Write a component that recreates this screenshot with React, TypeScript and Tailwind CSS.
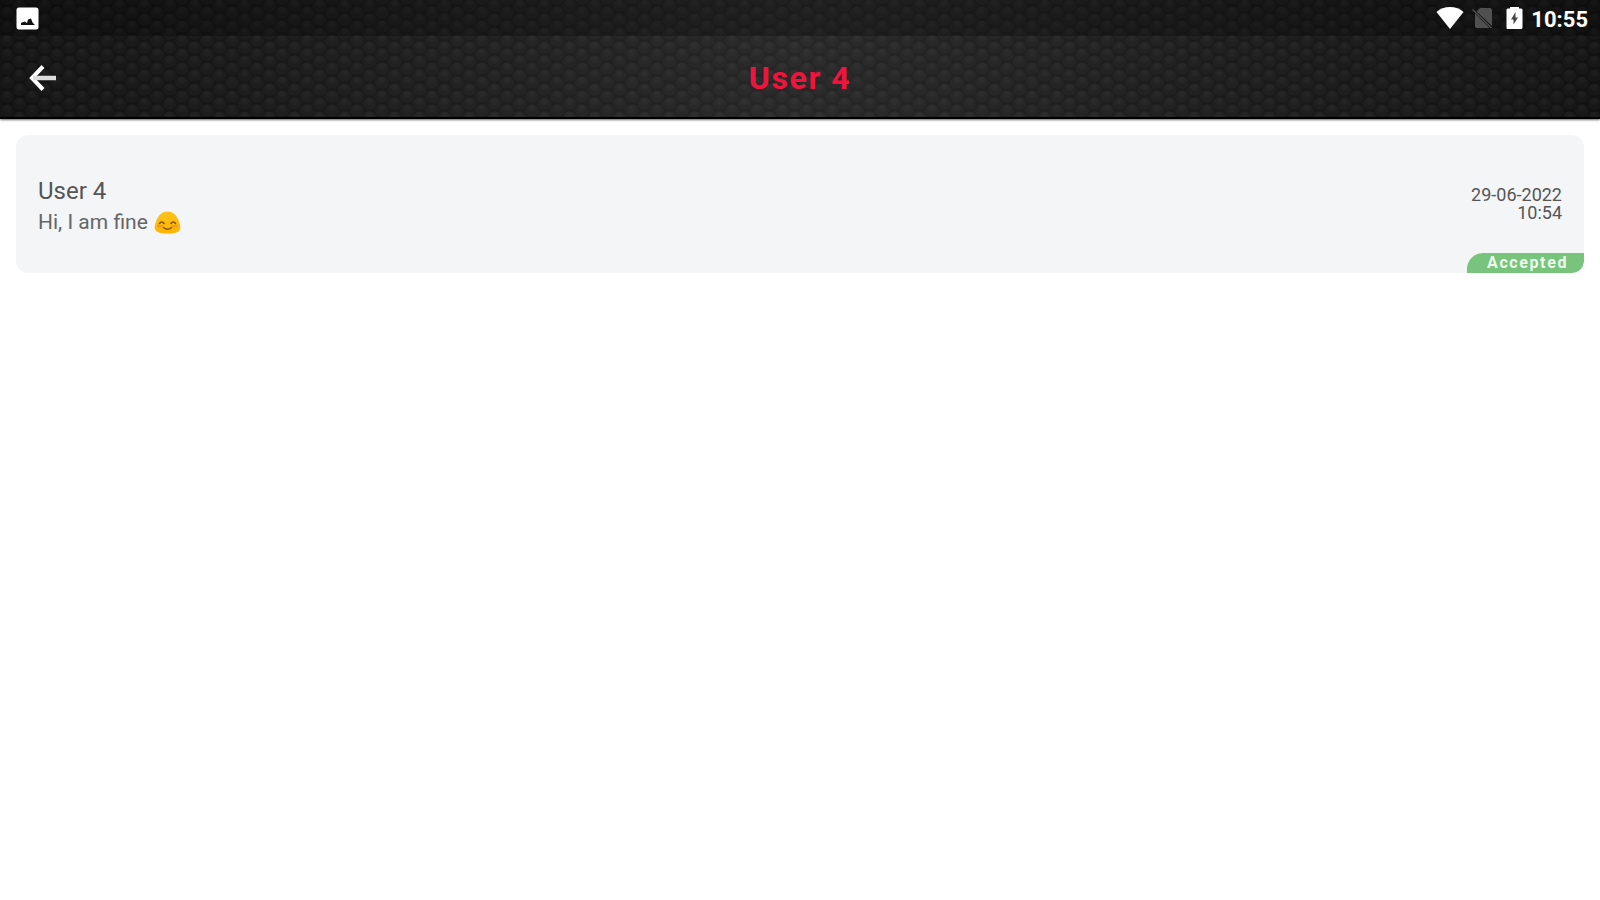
import React from 'react'

type Message = {
    id: number
    name: string
    text: string
    date: string
    time: string
    status: string
}

const messages: Message[] = [
    { id: 1, name: 'User 4', text: 'Hi, I am fine', date: '29-06-2022', time: '10:54', status: 'Accepted' },
]

const HexTexture = () => (
    <svg className="absolute inset-0 h-full w-full" aria-hidden="true">
        <defs>
            <radialGradient id="bump" cx="50%" cy="25%" r="75%">
                <stop offset="0" stopColor="#fff" stopOpacity="0.06" />
                <stop offset="0.6" stopColor="#fff" stopOpacity="0.02" />
                <stop offset="1" stopColor="#000" stopOpacity="0.08" />
            </radialGradient>
            <pattern id="hex" width="25" height="14" patternUnits="userSpaceOnUse" x="7" y="6">
                <rect width="25" height="14" fill="#000" fillOpacity="0.2" />
                <ellipse cx="0" cy="7" rx="7" ry="6.5" fill="url(#bump)" />
                <ellipse cx="25" cy="7" rx="7" ry="6.5" fill="url(#bump)" />
                <ellipse cx="12.5" cy="0" rx="7" ry="6.5" fill="url(#bump)" />
                <ellipse cx="12.5" cy="14" rx="7" ry="6.5" fill="url(#bump)" />
            </pattern>
        </defs>
        <rect width="100%" height="100%" fill="url(#hex)" />
    </svg>
)

const StatusBar = () => (
    <div className="flex h-9 items-center justify-between bg-black/25 pl-4 pr-3 text-white">
        <svg width="23" height="23" viewBox="0 0 23 23" role="img" aria-label="Screenshot">
            <rect x="0.5" y="0.5" width="22" height="22" rx="2.5" fill="#fff" />
            <path d="M5 18v-2l3.500-1.500 2.500 1.500 1-3.500 3-1 1.500 4 2.500 2.500z" fill="#111" />
        </svg>
        <div className="flex items-center">
            <svg width="28" height="22" viewBox="0 0 28 22" role="img" aria-label="Wi-Fi">
                <path d="M14 22L0.5 5C4 1.8 8.8 0 14 0s10 1.8 13.500 5z" fill="#fff" />
            </svg>
            <svg className="ml-2" width="22" height="22" viewBox="0 0 22 22" role="img" aria-label="No SIM">
                <path d="M8 1h10c1 0 2 1 2 2v16L4.500 4.500z" fill="#505050" />
                <path d="M3 6.500l14.500 14.500H5c-1 0-2-1-2-2z" fill="#505050" />
                <path d="M0.5 2.500l19 18.500" stroke="#505050" strokeWidth="1.5" />
            </svg>
            <svg className="ml-3" width="17" height="22" viewBox="0 0 17 22" role="img" aria-label="Battery charging">
                <path d="M4 0h9v1.500h2c1 0 1.500 1 1.500 1.500v17.500c0 1-1 1.500-1.500 1.500H2c-1 0-1.500-.5-1.500-1.500V3C.5 2.500 1 1.500 2 1.500h2z" fill="#fff" />
                <path d="M9.500 5L5 12.500H7.500V17.500L12 10.500H9.500z" fill="#444" />
            </svg>
            <span className="ml-2 pt-1 text-[22px] leading-8 font-bold">10:55</span>
        </div>
    </div>
)

const BlobSmile = () => (
    <svg width="27" height="23" viewBox="0 0 27 23" role="img" aria-label="Smile">
        <defs>
            <linearGradient id="blob" x1="0" y1="0" x2="0" y2="1">
                <stop offset="0" stopColor="#fcc21b" />
                <stop offset="1" stopColor="#ffb400" />
            </linearGradient>
        </defs>
        <path d="M13.500 0.500C20.500 0.500 24 6 26 14c1.500 6-2.500 8.500-12.500 8.500S-.5 20 1 14C3 6 6.500 0.500 13.500 0.500z" fill="url(#blob)" />
        <path d="M5.500 12.500q2.200-3 4.500 0M17 12.500q2.200-3 4.500 0M9.500 16.500q4 3.500 8 0" fill="none" stroke="#805500" strokeWidth="1.600" strokeLinecap="round" />
        <path d="M4 15h4M19 15h4" stroke="#f79329" strokeWidth="2" strokeLinecap="round" />
    </svg>
)

const Header = () => (
    <header className="relative border-b-2 border-black bg-linear-to-r from-[#161616] via-[#303030] to-[#161616] shadow-xs shadow-black/60">
        <HexTexture />
        <div className="relative">
            <StatusBar />
            <div className="grid grid-cols-[1fr_auto_1fr] items-center px-7 pt-[22px] pb-[19px]">
                <button type="button" aria-label="Back" className="w-7">
                    <svg width="28" height="26" viewBox="0 0 28 26" fill="none" stroke="#fff" strokeWidth="4">
                        <path d="M15 1.500L4 13l11 11.500" />
                        <path d="M5 13h23" stroke="#dcdcdc" strokeWidth="4.5" />
                    </svg>
                </button>
                <h1 className="text-[32px] leading-10 font-bold tracking-wider text-[#f0143c]">User 4</h1>
            </div>
        </div>
    </header>
)

const MessageCard = ({ message }: { message: Message }) => (
    <li className="overflow-hidden rounded-xl bg-[#f3f5f7] pt-10">
        <div className="flex items-center justify-between px-[22px]">
            <div className="text-[#666]">
                <h2 className="text-2xl text-[#555]">{message.name}</h2>
                <p className="flex items-center gap-1.5 text-[21px] leading-[30px]">
                    {message.text}
                    <BlobSmile />
                </p>
            </div>
            <div className="pb-1 text-right text-lg leading-[18px] text-[#555]">
                <p>{message.date}</p>
                <p>{message.time}</p>
            </div>
        </div>
        <div className="mt-4 flex justify-end">
            <span className="rounded-tl-2xl rounded-br-xl bg-[#78c47c] pl-5 pr-4 text-base leading-5 font-bold tracking-widest text-[#eefaee]">
                {message.status}
            </span>
        </div>
    </li>
)

const App = () => {
    return (
        <div className="min-h-screen bg-white font-[Roboto,sans-serif]">
            <Header />
            <main className="px-4 pt-4">
                <ul className="flex flex-col gap-4">
                    {messages.map((message) => (
                        <MessageCard key={message.id} message={message} />
                    ))}
                </ul>
            </main>
        </div>
    )
}

export default App
